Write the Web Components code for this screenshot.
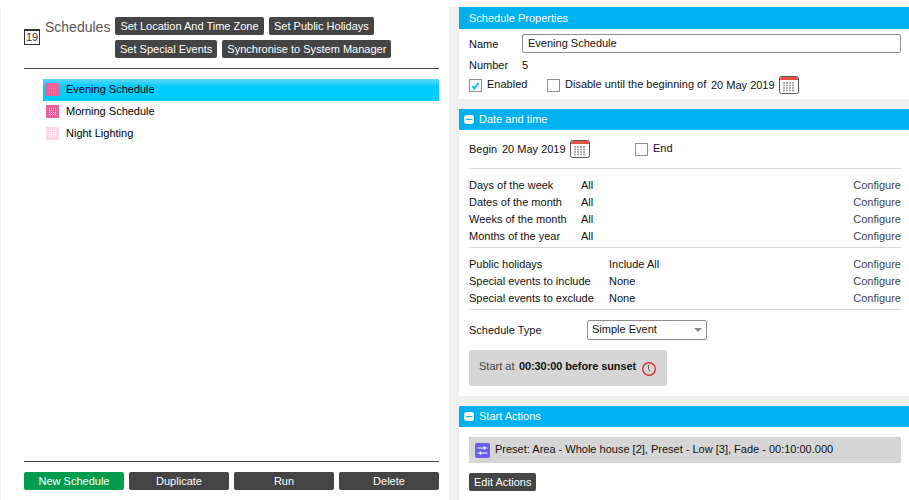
<!DOCTYPE html>
<html>
<head>
<meta charset="utf-8">
<title>Schedules</title>
<style>
  html, body { margin: 0; padding: 0; background: #fff; }
  body { font: 11px "Liberation Sans", Arial, sans-serif; color: #111; overflow: hidden; }
</style>
</head>
<body>
<schedule-app>
  <schedules-panel slot="left"></schedules-panel>
  <div slot="right">
    <prop-section heading="Schedule Properties" height="92">
      <schedule-properties></schedule-properties>
    </prop-section>
    <prop-section heading="Date and time" collapsible height="287">
      <date-time></date-time>
    </prop-section>
    <prop-section heading="Start Actions" collapsible height="94">
      <start-actions></start-actions>
    </prop-section>
  </div>
</schedule-app>

<script>
"use strict";

// || HELPERS ||
function makeComponent(name, html, setup) {
  customElements.define(name, class extends HTMLElement {
    constructor() {
      super();
      const temp = document.createElement("template");
      temp.innerHTML = html;
      const shadow = this.attachShadow({ mode: "open" });
      shadow.append(temp.content.cloneNode(true));
      if (setup) setup(this, shadow);
    }
  });
}

// || SMALL PARTS ||
makeComponent("dark-btn", `
  <style>
    :host { display: inline-flex; }
    div {
      flex: 1;
      display: flex;
      align-items: center;
      justify-content: center;
      box-sizing: border-box;
      height: 18px;
      padding: 0 5px;
      border-radius: 2px;
      background: #444;
      color: #fff;
      white-space: nowrap;
    }
    :host([green]) div { background: #009c4e; }
  </style>
  <div><slot></slot></div>
`);

makeComponent("cal-icon", `
  <style>
    :host { display: inline-flex; width: 20px; height: 18px; flex: none; }
  </style>
  <svg width="20" height="18" viewBox="0 0 20 18">
    <rect x=".5" y=".5" width="19" height="17" rx="2" fill="#fff" stroke="#555"/>
    <path d="M1 3a2 2 0 0 1 2-2h14a2 2 0 0 1 2 2v1H1z" fill="#e8504e"/>
    <path d="M4 7h12M4 9.500h12M4 12h12M4 14.500h12" stroke="#999" stroke-width="1.500" stroke-dasharray="2 1"/>
  </svg>
`);

makeComponent("check-box", `
  <style>
    :host { display: inline-flex; width: 13px; height: 13px; flex: none; }
    div { box-sizing: border-box; width: 13px; height: 13px; border: 1px solid #8e8e8e; background: #fff; }
    svg { display: none; }
    :host([checked]) div { background: #f4f4f4; }
    :host([checked]) svg { display: block; }
  </style>
  <div>
    <svg width="11" height="11" viewBox="0 0 11 11">
      <path d="M2.500 6l2 2.500 4-5.500" fill="none" stroke="#16b6f5" stroke-width="2"/>
    </svg>
  </div>
`);

makeComponent("sched-icon", `
  <style>
    :host { display: inline-flex; width: 13px; height: 13px; flex: none; }
  </style>
  <svg width="13" height="13" viewBox="0 0 13 13">
    <rect x="1" y="1" width="11" height="11" fill="var(--edge)" stroke="var(--edge)" stroke-width="2"/>
    <path d="M3 3.500h7M3 5.500h7M3 7.500h7M3 9.500h7" stroke="var(--dot, #fff)" stroke-width="1" stroke-dasharray="1 1"/>
  </svg>
`);

makeComponent("config-row", `
  <style>
    :host { display: grid; grid-template-columns: var(--value-at, 112px) 1fr auto; height: 17px; align-items: center; white-space: nowrap; }
    .link { color: #444; }
  </style>
  <span><slot name="label"></slot></span>
  <span><slot name="value"></slot></span>
  <span class="link">Configure</span>
`);

// || LEFT SIDE ||
makeComponent("schedule-item", `
  <style>
    :host { display: flex; align-items: center; gap: 7px; box-sizing: border-box; height: 22px; padding: 0 0 2px 3px; color: #000; }
    :host([selected]) { background: linear-gradient(#5fd6f8, #00ccff 35%); --dot: #8ea8d8; }
  </style>
  <sched-icon></sched-icon>
  <slot></slot>
`);

makeComponent("schedules-panel", `
  <style>
    :host { display: flex; flex-direction: column; height: 500px; box-sizing: border-box; padding: 17px 10px 10px 23px; background: #fff; }
    .top { display: flex; height: 41px; }
    .cal {
      box-sizing: border-box; width: 16px; height: 16px; flex: none; margin-top: 12px; margin-right: 5px;
      border: 1px solid #333; border-top-width: 2px;
      font-size: 11px; line-height: 13px; text-align: center; color: #333;
    }
    .title { width: 70px; flex: none; font-size: 14px; line-height: 20px; color: #555; }
    .btns { display: flex; flex-wrap: wrap; align-content: flex-start; gap: 5px; width: 300px; }
    hr { width: 100%; box-sizing: border-box; border: 0; border-top: 1px solid #444; margin: 10px 0 0; }
    ul { list-style: none; margin: 10px 0 0 19px; padding: 0; flex: 1; }
    .actions { display: grid; grid-template-columns: repeat(4, 1fr); gap: 5px; margin-top: 10px; }
  </style>
  <div class="top">
    <div class="cal">19</div>
    <div class="title">Schedules</div>
    <div class="btns">
      <dark-btn style="width:149px">Set Location And Time Zone</dark-btn>
      <dark-btn>Set Public Holidays</dark-btn>
      <dark-btn>Set Special Events</dark-btn>
      <dark-btn style="width:169px">Synchronise to System Manager</dark-btn>
    </div>
  </div>
  <hr>
  <ul>
    <schedule-item selected style="--edge:#e8639c">Evening Schedule</schedule-item>
    <schedule-item style="--edge:#e8639c">Morning Schedule</schedule-item>
    <schedule-item style="--edge:#fbd9e8">Night Lighting</schedule-item>
  </ul>
  <hr>
  <div class="actions">
    <dark-btn green>New Schedule</dark-btn>
    <dark-btn>Duplicate</dark-btn>
    <dark-btn>Run</dark-btn>
    <dark-btn>Delete</dark-btn>
  </div>
`);

// || RIGHT SIDE ||
makeComponent("prop-section", `
  <style>
    :host { display: block; margin-bottom: 10px; background: #fff; }
    .head {
      display: flex; align-items: center; gap: 5px;
      height: 22px; padding-left: 10px;
      background: #00b1f0; color: #fff;
    }
    :host([collapsible]) .head { box-sizing: border-box; height: 21px; padding: 0 0 1px 5px; }
    .minus { display: none; width: 10px; height: 9px; border-radius: 3px; background: #fff; position: relative; }
    .minus::after { content: ""; position: absolute; left: 2px; right: 2px; top: 4px; height: 1px; background: #00b1f0; }
    :host([collapsible]) .minus { display: block; }
    .body { padding: 0 8px 0 10px; box-sizing: border-box; }
  </style>
  <div class="head"><span class="minus"></span><span class="text"></span></div>
  <div class="body"><slot></slot></div>
`, (el, shadow) => {
  shadow.querySelector(".text").textContent = el.getAttribute("heading");
  shadow.querySelector(".body").style.height = (el.getAttribute("height") - 22 + (el.hasAttribute("collapsible") ? 1 : 0)) + "px";
});

makeComponent("schedule-properties", `
  <style>
    :host { display: block; padding-top: 5px; }
    .name { display: flex; align-items: center; height: 19px; }
    .lbl { width: 53px; flex: none; }
    .input {
      flex: 1; box-sizing: border-box; height: 19px; padding: 0 5px;
      border: 1px solid #8e8e8e; border-radius: 2px; line-height: 16px;
    }
    .num { display: flex; align-items: center; box-sizing: border-box; height: 17px; margin-top: 4px; padding-bottom: 1px; }
    .opts { display: flex; align-items: center; height: 18px; margin-top: 2px; }
    check-box { margin-right: 5px; }
    .en { width: 60px; padding-bottom: 2px; }
    .dis { width: 146px; white-space: nowrap; padding-bottom: 2px; }
    .date { width: 68px; white-space: nowrap; }
  </style>
  <div class="name"><span class="lbl">Name</span><span class="input">Evening Schedule</span></div>
  <div class="num"><span class="lbl">Number</span><span>5</span></div>
  <div class="opts">
    <check-box checked></check-box><span class="en">Enabled</span>
    <check-box></check-box><span class="dis">Disable until the beginning of</span>
    <span class="date">20 May 2019</span><cal-icon></cal-icon>
  </div>
`);

makeComponent("date-time", `
  <style>
    :host { display: block; padding-top: 10px; }
    .begin { display: flex; align-items: center; height: 18px; white-space: nowrap; }
    .begin span.b { width: 33px; }
    .begin span.d { width: 68px; }
    .begin span.e { padding-bottom: 2px; }
    .begin check-box { margin-left: 45px; margin-right: 5px; }
    hr { border: 0; border-top: 1px solid #d8d8d8; margin: 0; }
    .h1 { margin-top: 10px; margin-bottom: 7px; }
    .h2 { margin: 3px 0 7px; }
    .h3 { margin: 3px 0 10px; }
    .holidays { --value-at: 140px; }
    .type { display: flex; align-items: center; height: 20px; }
    .type span.t { width: 118px; }
    .select {
      box-sizing: border-box; width: 120px; height: 20px; padding-left: 4px;
      display: flex; align-items: center; justify-content: space-between;
      border: 1px solid #8e8e8e; border-radius: 2px;
    }
    .select span { padding-bottom: 3px; }
    .select i { width: 0; height: 0; margin-right: 4px; border: 4px solid transparent; border-top: 4px solid #888; border-bottom: 0; }
    .start {
      display: flex; align-items: center; box-sizing: border-box;
      width: 198px; height: 36px; margin-top: 10px; padding-left: 10px;
      background: #d6d6d6; border-radius: 2px; white-space: nowrap;
    }
    .start .at { width: 40px; flex: none; color: #444; padding-bottom: 4px; }
    .start b { width: 123px; flex: none; padding-bottom: 4px; letter-spacing: -0.1px; }
    .start svg { flex: none; margin-top: 1px; }
  </style>
  <div class="begin">
    <span class="b">Begin</span><span class="d">20 May 2019</span><cal-icon></cal-icon>
    <check-box></check-box><span class="e">End</span>
  </div>
  <hr class="h1">
  <config-row><span slot="label">Days of the week</span><span slot="value">All</span></config-row>
  <config-row><span slot="label">Dates of the month</span><span slot="value">All</span></config-row>
  <config-row><span slot="label">Weeks of the month</span><span slot="value">All</span></config-row>
  <config-row><span slot="label">Months of the year</span><span slot="value">All</span></config-row>
  <hr class="h2">
  <div class="holidays">
    <config-row><span slot="label">Public holidays</span><span slot="value">Include All</span></config-row>
    <config-row><span slot="label">Special events to include</span><span slot="value">None</span></config-row>
    <config-row><span slot="label">Special events to exclude</span><span slot="value">None</span></config-row>
  </div>
  <hr class="h3">
  <div class="type">
    <span class="t">Schedule Type</span>
    <div class="select"><span>Simple Event</span><i></i></div>
  </div>
  <div class="start">
    <span class="at">Start at</span><b>00:30:00 before sunset</b>
    <svg width="14" height="14" viewBox="0 0 14 14">
      <circle cx="7" cy="7" r="6.300" fill="none" stroke="#dc1f26" stroke-width="1.200"/>
      <path d="M6.500 3v4.500l1.500 1.500" fill="none" stroke="#666" stroke-width="1"/>
    </svg>
  </div>
`);

makeComponent("start-actions", `
  <style>
    :host { display: block; padding-top: 10px; }
    .bar { display: flex; align-items: center; gap: 5px; height: 26px; padding-left: 6px; background: #d6d6d6; white-space: nowrap; }
    .bar svg { flex: none; }
    .bar span { padding-bottom: 3px; }
    dark-btn { margin-top: 10px; }
  </style>
  <div class="bar">
    <svg width="15" height="15" viewBox="0 0 15 15">
      <rect width="15" height="15" rx="2" fill="#6a5cf5"/>
      <path d="M2.500 5h10M2.500 10h10" stroke="#fff" stroke-width="1"/>
      <path d="M9.500 3.500v3M5.500 8.500v3" stroke="#fff" stroke-width="1.500"/>
    </svg>
    <span>Preset: Area - Whole house [2], Preset - Low [3], Fade - 00:10:00.000</span>
  </div>
  <dark-btn>Edit Actions</dark-btn>
`);

makeComponent("schedule-app", `
  <style>
    :host { display: block; height: 500px; padding-top: 7px; box-sizing: border-box; }
    .wrap { display: grid; grid-template-columns: 448px 1fr; column-gap: 10px; height: 493px; padding-left: 1px; background: #f0f0f0; overflow: hidden; box-sizing: border-box; }
    .left { margin-top: -7px; }
  </style>
  <div class="wrap">
    <div class="left"><slot name="left"></slot></div>
    <div><slot name="right"></slot></div>
  </div>
`);
</script>
</body>
</html>
